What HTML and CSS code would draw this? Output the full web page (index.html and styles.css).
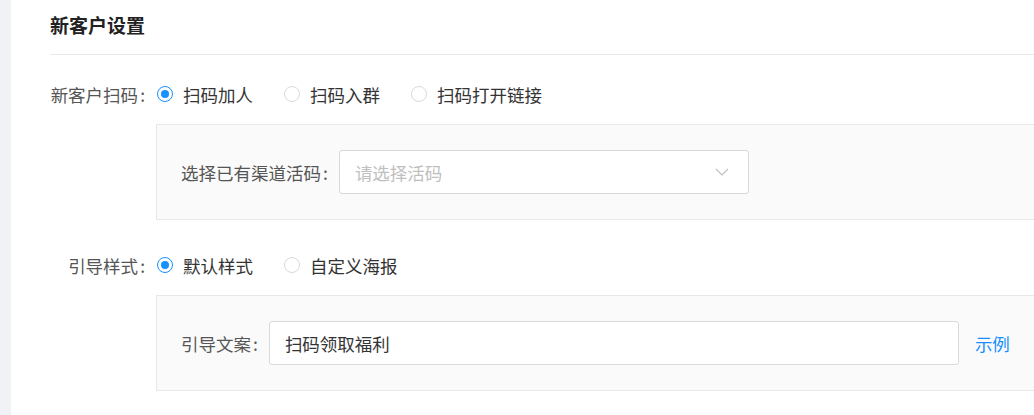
FILE: index.html
```html
<!DOCTYPE html>
<html lang="zh-CN">
<head>
  <meta charset="UTF-8">
  <meta name="viewport" content="width=device-width, initial-scale=1.0">
  <title>新客户设置</title>
  <link rel="stylesheet" href="styles.css">
</head>
<body>
  <div class="side"></div>
  <div class="main">
    <div class="section-title">新客户设置</div>

    <div class="form-row first">
      <div class="form-label">新客户扫码<span class="colon">:</span></div>
      <div class="radio-group">
        <label class="radio checked"><span class="dot"></span>扫码加人</label>
        <label class="radio"><span class="dot"></span>扫码入群</label>
        <label class="radio"><span class="dot"></span>扫码打开链接</label>
      </div>
    </div>
    <div class="sub-box">
      <span class="sub-label">选择已有渠道活码<span class="colon">:</span></span>
      <div class="select">
        <span class="placeholder">请选择活码</span>
        <svg class="arrow" width="14" height="8" viewBox="0 0 14 8"><path d="M1 1l6 6 6-6" fill="none" stroke="#bfbfbf" stroke-width="1.2"/></svg>
      </div>
    </div>

    <div class="form-row">
      <div class="form-label">引导样式<span class="colon">:</span></div>
      <div class="radio-group">
        <label class="radio checked"><span class="dot"></span>默认样式</label>
        <label class="radio"><span class="dot"></span>自定义海报</label>
      </div>
    </div>
    <div class="sub-box">
      <span class="sub-label">引导文案<span class="colon">:</span></span>
      <div class="input">扫码领取福利</div>
      <a class="link" href="#">示例</a>
    </div>
  </div>
</body>
</html>
```

FILE: styles.css
```css
body {
  margin: 0;
  display: flex;
  overflow: hidden;
  font-family: "Noto Sans CJK SC", sans-serif;
  font-size: 17.5px;
  color: #333;
  background: #fff;
}
.side {
  flex: 0 0 11px;
  height: 415px;
  background: #f0f2f5;
}
.main {
  flex: 0 0 1100px;
  padding-left: 39px;
}
.section-title {
  font-size: 19px;
  font-weight: bold;
  color: #222;
  line-height: 22px;
  padding: 14px 0 18px;
  border-bottom: 1px solid #e8e8e8;
}
.form-row {
  display: flex;
  align-items: center;
  height: 32px;
  margin-top: 29px;
}
.form-row.first {
  margin-top: 23px;
}
.form-label {
  box-sizing: border-box;
  width: 97px;
  padding-right: 2px;
  margin-right: 10px;
  text-align: right;
  color: #555;
  white-space: nowrap;
}
.colon {
  margin-left: 2px;
}
.radio-group {
  display: flex;
  align-items: center;
}
.radio {
  display: flex;
  align-items: center;
  margin-right: 31px;
  white-space: nowrap;
}
.dot {
  box-sizing: border-box;
  width: 16px;
  height: 16px;
  border: 1px solid #d9d9d9;
  border-radius: 50%;
  margin-right: 10px;
  position: relative;
}
.radio.checked .dot {
  border-color: #1890ff;
}
.radio.checked .dot::after {
  content: "";
  position: absolute;
  left: 3px;
  top: 3px;
  width: 8px;
  height: 8px;
  border-radius: 50%;
  background: #1890ff;
}
.sub-box {
  display: flex;
  align-items: center;
  margin-top: 14px;
  margin-left: 106px;
  padding: 25px 24px;
  background: #fafafa;
  border: 1px solid #e8e8e8;
}
.sub-label {
  color: #555;
  margin-right: 11px;
  white-space: nowrap;
}
.select, .input {
  box-sizing: border-box;
  height: 44px;
  border: 1px solid #d9d9d9;
  border-radius: 3px;
  background: #fff;
  display: flex;
  align-items: center;
  padding: 0 15px;
}
.select {
  width: 410px;
  justify-content: space-between;
}
.placeholder {
  color: #bfbfbf;
}
.arrow {
  margin-right: 4px;
}
.input {
  width: 690px;
  color: #333;
}
.link {
  margin-left: 16px;
  color: #1890ff;
  text-decoration: none;
}
```
